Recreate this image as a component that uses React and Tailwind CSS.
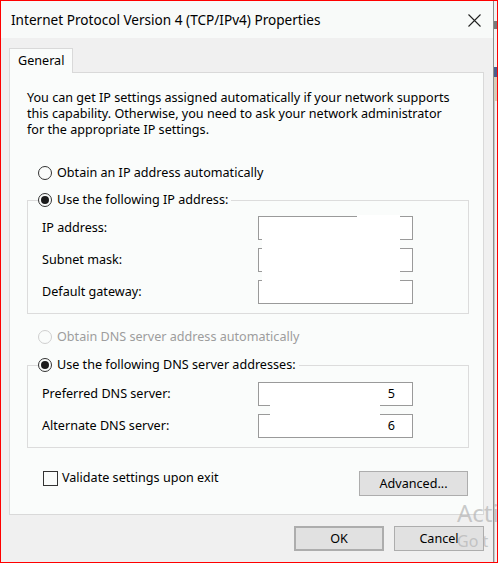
import React from "react";

const Radio = ({ checked, disabled }) => (
  <span
    className={
      disabled
        ? "w-[14px] h-[14px] rounded-full border border-[#cfcfcf] bg-[#fafcfb] flex items-center justify-center shrink-0"
        : "w-[14px] h-[14px] rounded-full border border-[#333333] bg-[#fafcfb] flex items-center justify-center shrink-0"
    }
  >
    {checked && <span className="w-[8px] h-[8px] rounded-full bg-[#1b1b1b]" />}
  </span>
);

const Field = ({ label, value }) => (
  <div className="flex items-center h-[24px]">
    <span className="w-[216px]">{label}</span>
    <div className="w-[155px] h-[24px] border border-[#9a9a9a] bg-white flex items-center justify-end pr-[17px]">
      {value}
    </div>
  </div>
);

const Button = ({ children, className }) => (
  <div
    className={
      "h-[25px] flex items-center justify-center bg-[#e1e1e1] border border-[#adadad] " +
      className
    }
  >
    {children}
  </div>
);

export default function App() {
  return (
    <div className="w-[498px] h-[563px] border border-[#ff0000] flex overflow-hidden relative bg-[#f0f0f0] font-['Noto_Sans',sans-serif] text-[12.6px] text-black leading-[16px]">
      {/* dialog window */}
      <div className="w-[493px] flex flex-col border-r border-[#8c8c8c] bg-[#f0f0f0]">
        {/* title bar */}
        <div className="h-[37px] shrink-0 bg-[#f8faf9] flex items-center justify-between pl-[10px] pr-[11px]">
          <span className="text-[13.6px]">Internet Protocol Version 4 (TCP/IPv4) Properties</span>
          <svg width="15" height="15" viewBox="0 0 15 15" className="mt-[1px]">
            <path d="M1.5 1.5 L13.5 13.5 M13.5 1.5 L1.5 13.5" stroke="#222" strokeWidth="1.1" fill="none" />
          </svg>
        </div>

        {/* body */}
        <div className="flex-1 flex flex-col pt-[10px] px-[8px]">
          {/* tab */}
          <div className="flex">
            <div className="w-[64px] h-[25px] bg-[#fafcfb] border border-b-0 border-[#d9d9d9] flex items-center pl-[8px] relative z-10 -mb-[1px]">
              General
            </div>
          </div>

          {/* tab page */}
          <div className="w-[475px] h-[443px] bg-[#fafcfb] border border-[#d9d9d9] pt-[17px] pl-[17px] flex flex-col">
            <p>
              You can get IP settings assigned automatically if your network supports
              <br />
              this capability. Otherwise, you need to ask your network administrator
              <br />
              for the appropriate IP settings.
            </p>

            <div className="mt-[27px] ml-[11px] h-[16px] flex items-center gap-[5px]">
              <Radio />
              <span>Obtain an IP address automatically</span>
            </div>

            <fieldset className="mt-[11px] w-[442px] border border-[#dcdcdc] pb-[9px]">
              <legend className="ml-[10px] pr-[3px]">
                <span className="h-[16px] flex items-center gap-[5px]">
                  <Radio checked />
                  <span>Use the following IP address:</span>
                </span>
              </legend>
              <div className="relative mt-[8px] pl-[14px] flex flex-col gap-[8px]">
                <Field label="IP address:" />
                <Field label="Subnet mask:" />
                <Field label="Default gateway:" />
                <div className="absolute left-[234px] top-[1px] w-[138px] h-[81px] bg-white" />
                <div className="absolute left-[329px] -top-[1px] w-[43px] h-[3px] bg-white" />
              </div>
            </fieldset>

            <div className="mt-[15px] ml-[11px] h-[16px] flex items-center gap-[5px] text-[#9d9d9d]">
              <Radio disabled />
              <span>Obtain DNS server address automatically</span>
            </div>

            <fieldset className="mt-[12px] w-[442px] border border-[#dcdcdc] pb-[9px]">
              <legend className="ml-[10px] pr-[3px]">
                <span className="h-[16px] flex items-center gap-[5px]">
                  <Radio checked />
                  <span>Use the following DNS server addresses:</span>
                </span>
              </legend>
              <div className="relative mt-[9px] pl-[14px] flex flex-col gap-[8px]">
                <Field label="Preferred DNS server:" value="5" />
                <Field label="Alternate DNS server:" value="6" />
                <div className="absolute left-[242px] top-[2px] w-[110px] h-[49px] bg-white" />
              </div>
            </fieldset>

            <div className="mt-[22px] w-[441px] flex items-start justify-between">
              <div className="ml-[16px] flex items-center gap-[4px]">
                <span className="w-[15px] h-[15px] border border-[#333333] bg-[#fafcfb]" />
                <span>Validate settings upon exit</span>
              </div>
              <Button className="mt-[1px] w-[109px] h-[25px]">Advanced...</Button>
            </div>
          </div>

          {/* dialog buttons */}
          <div className="mt-[11px] flex justify-end gap-[10px] pr-[1px]">
            <Button className="w-[90px] border-2 border-[#0078d7]">OK</Button>
            <Button className="w-[90px]">Cancel</Button>
          </div>
        </div>
      </div>

      {/* sliver of the window behind */}
      <div className="flex-1 flex flex-col bg-[#f3f3f3]">
        <div className="h-[20px]" />
        <div className="h-[8px] bg-[#7a7a7a]" />
        <div className="h-[38px]" />
        <div className="h-[10px] bg-[#4b5d8a]" />
        <div className="h-[24px] bg-[#d7ccb8]" />
        <div className="flex-1 border-l border-[#c9c9c9]" />
      </div>

      {/* activation watermark, only the part that shows */}
      <div className="absolute left-[456px] top-[498px] text-[24px] leading-[28px] whitespace-nowrap text-[#b4b4b4]/70 pointer-events-none">
        Acti
      </div>
      <div className="absolute left-[456px] top-[530px] text-[16px] leading-[20px] whitespace-nowrap text-[#b4b4b4]/70 pointer-events-none">
        Go t
      </div>
    </div>
  );
}
